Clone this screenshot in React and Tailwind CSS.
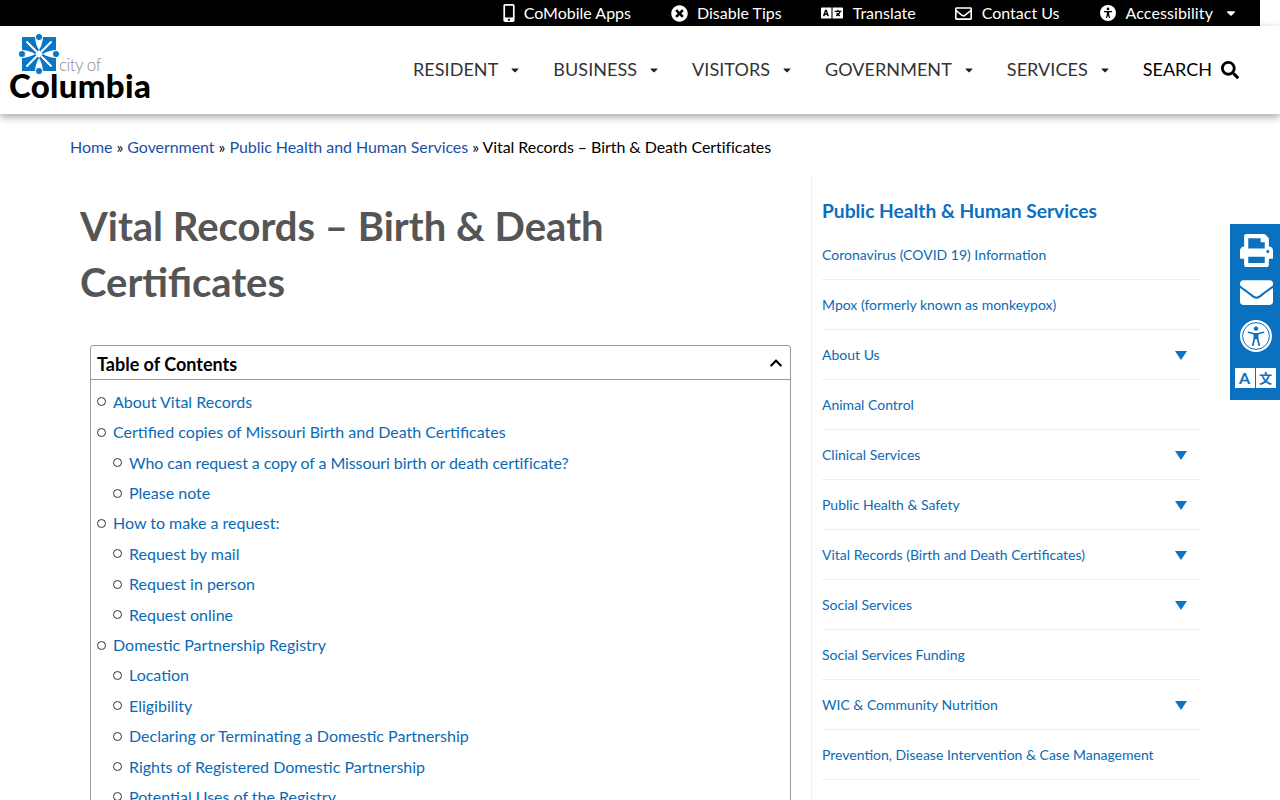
import { FaMobileAlt, FaTimesCircle, FaLanguage, FaRegEnvelope, FaSearch, FaPrint, FaEnvelope, FaCaretDown, FaChevronUp } from 'react-icons/fa'

const topLinks = [
  { label: 'CoMobile Apps', box: 'w-[20px]', gap: 'gap-[5px]', icon: <FaMobileAlt className="text-[18px]" /> },
  { label: 'Disable Tips', box: 'w-[20px]', gap: 'gap-[8px]', icon: <FaTimesCircle className="text-[17px]" /> },
  { label: 'Translate', box: 'w-[24px]', gap: 'gap-[9px]', icon: <FaLanguage className="text-[22px]" /> },
  { label: 'Contact Us', box: 'w-[20px]', gap: 'gap-[8px]', icon: <FaRegEnvelope className="text-[17px]" /> },
]

const navLinks = ['RESIDENT', 'BUSINESS', 'VISITORS', 'GOVERNMENT', 'SERVICES']

const toc = [
  { text: 'About Vital Records' },
  { text: 'Certified copies of Missouri Birth and Death Certificates' },
  { text: 'Who can request a copy of a Missouri birth or death certificate?', sub: true },
  { text: 'Please note', sub: true },
  { text: 'How to make a request:' },
  { text: 'Request by mail', sub: true },
  { text: 'Request in person', sub: true },
  { text: 'Request online', sub: true },
  { text: 'Domestic Partnership Registry' },
  { text: 'Location', sub: true },
  { text: 'Eligibility', sub: true },
  { text: 'Declaring or Terminating a Domestic Partnership', sub: true },
  { text: 'Rights of Registered Domestic Partnership', sub: true },
  { text: 'Potential Uses of the Registry', sub: true },
]

const sideLinks = [
  { text: 'Coronavirus (COVID 19) Information' },
  { text: 'Mpox (formerly known as monkeypox)' },
  { text: 'About Us', arrow: true },
  { text: 'Animal Control' },
  { text: 'Clinical Services', arrow: true },
  { text: 'Public Health & Safety', arrow: true },
  { text: 'Vital Records (Birth and Death Certificates)', arrow: true },
  { text: 'Social Services', arrow: true },
  { text: 'Social Services Funding' },
  { text: 'WIC & Community Nutrition', arrow: true },
  { text: 'Prevention, Disease Intervention & Case Management' },
]

function Logo() {
  return (
    <div className="relative w-[160px] h-[88px] shrink-0">
      <svg className="absolute left-[18px] top-[7px]" width="42" height="42" viewBox="0 0 42 42">
        <g fill="#0a76c4">
          <path d="M4 4h13c.5 6 2 10 4 13l-4 4c-3-2-7-3.5-13-4z" />
          <path d="M38 4H25c-.5 6-2 10-4 13l4 4c3-2 7-3.5 13-4z" />
          <path d="M4 38h13c.5-6 2-10 4-13l-4-4c-3 2-7 3.5-13 4z" />
          <path d="M38 38H25c-.5-6-2-10-4-13l4-4c3 2 7 3.5 13 4z" />
        </g>
        <path d="M9 9l9.5 9.5M33 9l-9.5 9.5M9 33l9.5-9.5M33 33l-9.5-9.5" stroke="#fff" strokeWidth="2" strokeLinecap="round" />
        <g fill="#0a76c4" stroke="#fff" strokeWidth="1">
          <circle cx="21" cy="4" r="3.6" />
          <circle cx="21" cy="38" r="3.6" />
          <circle cx="4" cy="21" r="3.6" />
          <circle cx="38" cy="21" r="3.6" />
        </g>
      </svg>
      <span className="absolute left-[59px] top-[31px] text-[17px] leading-[16px] font-light text-[#8a8a8a] tracking-[-0.5px]">city of</span>
      <span className="absolute left-[9px] top-[47px] text-[33px] leading-[24px] font-black text-black tracking-[0.3px]">Columbia</span>
    </div>
  )
}

function AccessIcon({ className }) {
  return (
    <svg className={className} viewBox="0 0 32 32">
      <circle cx="16" cy="16" r="16" fill="#fff" />
      <circle cx="16" cy="16" r="13.4" fill="none" stroke="#0a70c0" strokeWidth="1" />
      <circle cx="16" cy="8.6" r="2.2" fill="#0a70c0" />
      <path d="M8.5 12.3l5.5 1.5h4l5.5-1.5M14.4 14v4.6l-1.6 6.6M17.6 14v4.6l1.6 6.6" fill="none" stroke="#0a70c0" strokeWidth="1.7" strokeLinecap="round" strokeLinejoin="round" />
      <path d="M14.4 13.8h3.2v5.4h-3.2z" fill="#0a70c0" />
    </svg>
  )
}

export default function App() {
  return (
    <div className="relative h-[800px] overflow-hidden bg-white font-['Lato',sans-serif]">
      {/* Top black bar */}
      <div className="w-[1260px] h-[26px] bg-black flex items-center justify-end pr-[22px] text-white text-[16px] gap-[38px]">
        {topLinks.map((l) => (
          <a key={l.label} className={`flex items-center ${l.gap}`}>
            <span className={`flex justify-center ${l.box}`}>{l.icon}</span>
            {l.label}
          </a>
        ))}
        <a className="flex items-center">
          <span className="flex justify-center w-[20px] mr-[8px]">
            <svg width="16" height="16" viewBox="0 0 16 16">
              <circle cx="8" cy="8" r="8" fill="#fff" />
              <circle cx="8" cy="3.9" r="1.3" fill="#000" />
              <path d="M4 6h8v1.2H9.2v2.2l1 3.6H9L8 10.2 7 13H5.8l1-3.6V7.2H4z" fill="#000" />
            </svg>
          </span>
          <span className="tracking-[0.1px]">Accessibility</span>
          <FaCaretDown className="ml-[11px] text-[14px]" />
        </a>
      </div>

      {/* Main nav */}
      <div className="h-[88px] bg-white shadow-[0_3px_8px_rgba(0,0,0,0.35)] relative flex items-center">
        <Logo />
        <nav className="ml-auto flex items-center pr-[41px] pb-[1px] text-[18px] text-[#333]">
          {navLinks.map((n) => (
            <a key={n} className="flex items-center mr-[32px] tracking-[0.05px]">
              {n}
              <FaCaretDown className="ml-[11px] w-[12px] text-[12px] text-[#222]" />
            </a>
          ))}
          <a className="flex items-center text-black">
            SEARCH
            <FaSearch className="ml-[9px] text-[18px]" />
          </a>
        </nav>
      </div>

      {/* Breadcrumb */}
      <div className="pl-[70px] pt-[21px] text-[16px] leading-[24px] text-black tracking-[-0.06px]">
        <a className="text-[#1c4fa8]">Home</a> » <a className="text-[#1c4fa8]">Government</a> » <a className="text-[#1c4fa8]">Public Health and Human Services</a> » Vital Records – Birth &amp; Death Certificates
      </div>

      <div className="flex mt-[18px]">
        {/* Content */}
        <div className="w-[811px] shrink-0 pl-[80px] pr-[20px] pt-[21px]">
          <h1 className="text-[40px] leading-[56px] font-bold text-[#555] w-[640px]">Vital Records – Birth &amp; Death Certificates</h1>
          <div className="ml-[10px] mt-[35px] border border-[#999] rounded-t-[3px] w-[701px]">
            <div className="h-[34px] flex items-center justify-between pl-[6px] pr-[7px] border-b border-[#999]">
              <span className="text-[18px] font-bold text-black pt-[4px]">Table of Contents</span>
              <FaChevronUp className="text-[14px] text-black" />
            </div>
            <ul className="pt-[6.7px] pl-[6px]">
              {toc.map((t) => (
                <li key={t.text} className={`flex items-center h-[30.4px] text-[16px] text-[#0a6ab5] ${t.sub ? 'pl-[16px]' : ''}`}>
                  <span className="w-[9px] h-[9px] rounded-full border-[1.5px] border-[#333] mr-[7px] shrink-0" />
                  <a className={t.text.startsWith('Who') ? 'tracking-[-0.09px]' : ''}>{t.text}</a>
                </li>
              ))}
            </ul>
          </div>
        </div>

        {/* Sidebar */}
        <aside className="border-l border-[#eee] w-[389px] pl-[10px] pt-[20px]">
          <h2 className="text-[19.2px] leading-[28px] font-bold text-[#0a6fc2] mb-[5px]">Public Health &amp; Human Services</h2>
          <ul>
            {sideLinks.map((s) => (
              <li key={s.text} className="h-[50px] flex items-center justify-between border-b border-[#eee] pr-[13px] text-[14px] text-[#0a6ab5]">
                <a>{s.text}</a>
                {s.arrow && <span className="w-0 h-0 mt-[1px] border-l-[6px] border-r-[6px] border-t-[9px] border-l-transparent border-r-transparent border-t-[#0a76c4]" />}
              </li>
            ))}
          </ul>
        </aside>
      </div>

      {/* Floating share tools */}
      <div className="absolute right-0 top-[224px] w-[50px] h-[176px] bg-[#0a70c0] flex flex-col items-center text-white">
        <FaPrint className="text-[33px] mt-[10px] ml-[2px]" />
        <FaEnvelope className="text-[33px] mt-[9px] ml-[2px]" />
        <AccessIcon className="w-[32px] h-[32px] mt-[11px] ml-[2px] shrink-0" />
        <div className="flex mt-[16px] gap-[1px] h-[20px] w-[41px] text-[16px] leading-[20px] font-bold text-[#0a70c0] text-center">
          <span className="flex-1 bg-white">A</span>
          <span className="flex-1 bg-white font-['Noto_Sans_CJK_SC',sans-serif] text-[13px]">文</span>
        </div>
      </div>
    </div>
  )
}
